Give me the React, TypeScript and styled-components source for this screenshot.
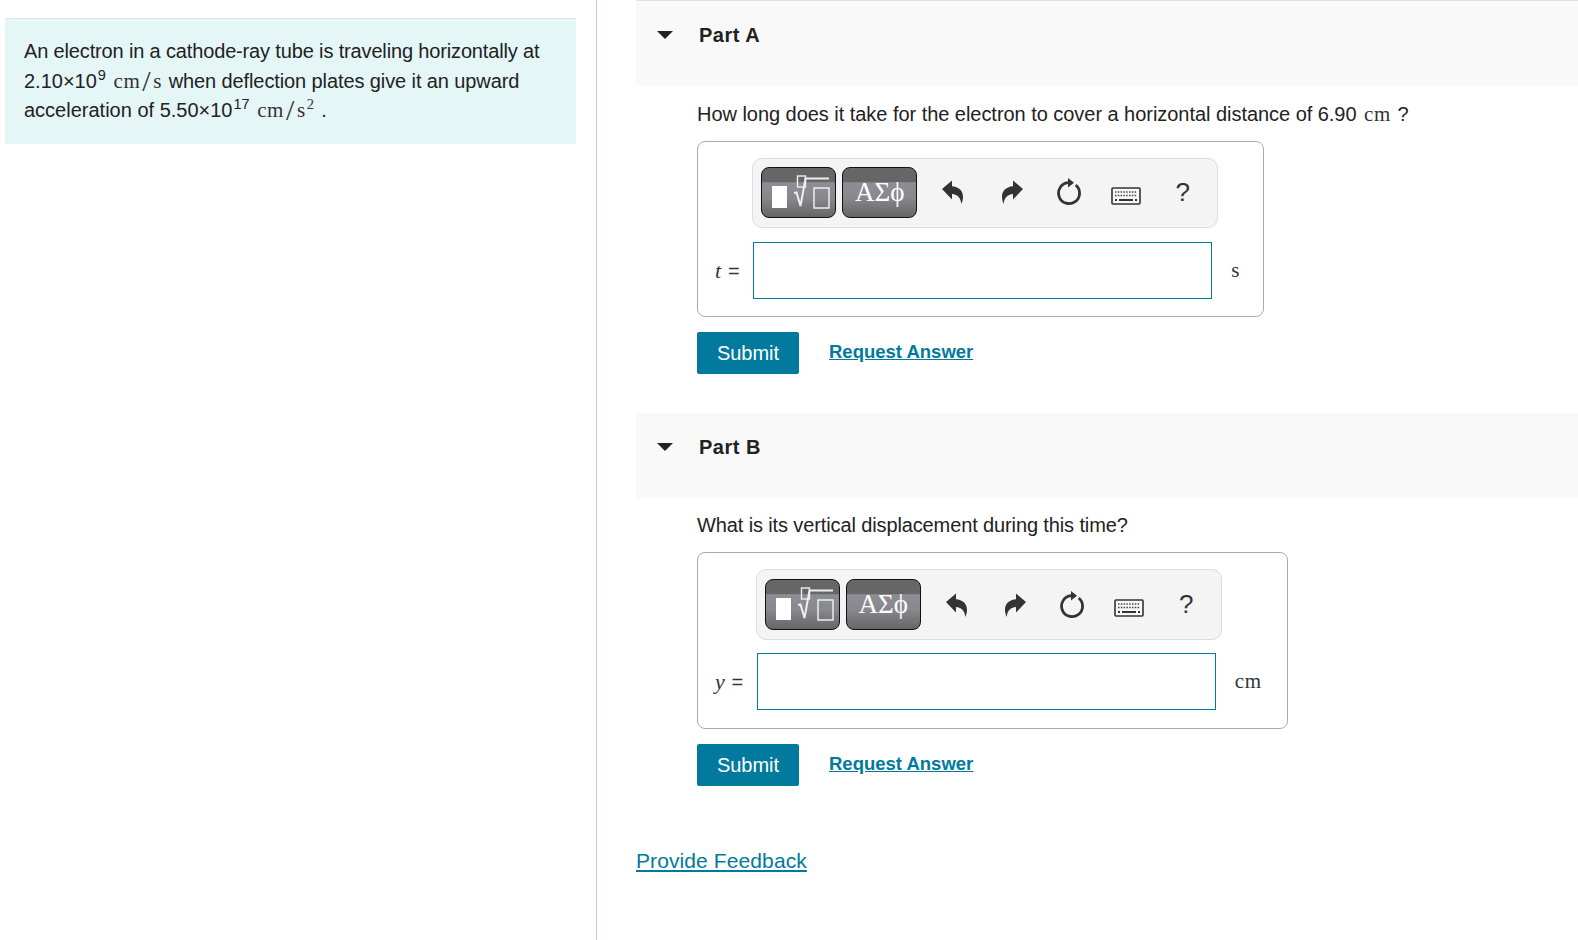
import React from "react";
import styled, { createGlobalStyle } from "styled-components";

const Global = createGlobalStyle`
  html, body { margin: 0; padding: 0; background: #fff; }
  body { font-family: "Liberation Sans", Arial, sans-serif; color: #222; font-size: 20px; }
`;
const Page = styled.div`display: flex; height: 940px; overflow: hidden;`;
const LeftColumn = styled.aside`
  width: 597px; flex: none; box-sizing: border-box; padding: 18px 20px 0 5px;
  border-right: 1px solid #bcd0e5;
`;
const Intro = styled.div`
  background: #e5f6f7; border-top: 1px solid #dfe5e6; height: 126px; box-sizing: border-box;
  padding: 18px 19px; font-size: 20px; line-height: 29.5px; color: #222;
`;
const Condensed = styled.span`letter-spacing: ${(p: { $s: number }) => p.$s}px;`;
const Sup = styled.sup`font-size: 14.5px; line-height: 0; vertical-align: baseline; position: relative; top: -8px; margin-left: 1px;`;
const MathText = styled.span`font-family: "Liberation Serif", serif; font-size: 21px; color: #333; letter-spacing: 0.6px; margin: 0 1px 0 2px;`;
const Slash = styled.span`font-size: 30px; font-weight: 300; line-height: 0; margin: 0 2px; position: relative; top: 3px;`;
const RightColumn = styled.main`flex: 1; padding-left: 39px; min-width: 0;`;
const PartSection = styled.section`margin-bottom: 39px;`;
const PartHeader = styled.header`
  box-sizing: border-box; background: #f9f9f9; display: flex; align-items: flex-start;
  padding: 22px 0 0 21px; gap: 26px;
  ${(p: { $top?: boolean }) => p.$top ? "height: 86px; border-top: 1px solid #e0e0e0;" : "height: 85px; padding-top: 22px;"}
`;
const Triangle = styled.span`
  width: 0; height: 0; margin-top: 8px; border-left: 8px solid transparent; border-right: 8px solid transparent;
  border-top: 8px solid #222;
`;
const PartTitle = styled.h2`margin: 0; font-size: 20px; line-height: 24px; font-weight: 700; color: #222; letter-spacing: 0.5px;`;
const PartBody = styled.div`padding-left: 61px;`;
const Question = styled.p<{ $s: number; $h: number }>`
  margin: 0; line-height: 26px; font-size: 20px; color: #222; box-sizing: border-box;
  height: ${(p) => p.$h}px; padding-top: ${(p) => p.$h - 40}px;
  letter-spacing: ${(p) => p.$s}px;
`;
const AnswerBox = styled.div<{ $right: number; $bottom: number }>`
  display: inline-grid; grid-template-columns: auto auto auto; align-items: center;
  border: 1px solid #aaa; border-radius: 8px; padding: 16px ${(p) => p.$right}px ${(p) => p.$bottom}px 16px;
  box-sizing: border-box;
`;
const Toolbar = styled.div<{ $tall?: boolean }>`
  grid-column: 2; margin-left: -1px; box-sizing: border-box;
  height: ${(p) => (p.$tall ? 71 : 70)}px; margin-bottom: ${(p) => (p.$tall ? 13 : 14)}px;
  background: #f4f4f4; border: 1px solid #ddd; border-radius: 10px; display: flex; align-items: center;
  padding: 0 0 ${(p) => (p.$tall ? 0 : 2)}px 8px; width: 466px;
`;
const TemplateButton = styled.div`
  width: 75px; height: 51px; box-sizing: border-box; border: 1px solid #111; border-radius: 8px; margin-right: 6px;
  background: linear-gradient(#666 0, #666 28%, #8d8d95 30%, #88888e 60%, #666 100%); color: #fff;
  display: flex; align-items: center; justify-content: center; flex: none;
  font-family: "Liberation Serif", serif; font-size: 27px; overflow: hidden;
`;
const IconSlot = styled.div<{ $w: number; $drop?: number }>`
  flex: none; display: flex; align-items: center; justify-content: center; color: #333;
  width: ${(p) => p.$w}px; height: 32px; margin-top: ${(p) => p.$drop ?? 0}px;
  font-family: "Liberation Sans", sans-serif; font-size: 26px;
`;
const Label = styled.div`
  grid-row: 2; padding-left: 1px; padding-right: 13px; font-size: 20px; letter-spacing: 0.6px; color: #333; white-space: nowrap;
`;
const Italic = styled.i`font-family: "Liberation Serif", serif; font-size: 22px;`;
const Field = styled.input`
  grid-row: 2; width: 459px; height: 57px; box-sizing: border-box; border: 1px solid #007c9e;
  background: #fff; outline: none; margin: 0; padding: 0;
`;
const Unit = styled.div`grid-row: 2; padding-left: 13px; font-family: "Liberation Serif", serif; font-size: 21px; color: #333; letter-spacing: 0.6px;`;
const Actions = styled.div`display: flex; align-items: center; gap: 30px; margin-top: 15px;`;
const SubmitButton = styled.button`
  width: 102px; height: 42px; background: #027a9d; color: #fff; border: 0; border-radius: 2px;
  font-family: inherit; font-size: 20px; padding: 0;
`;
const RequestLink = styled.a`font-size: 18.5px; font-weight: 700; color: #007a9c; text-decoration: underline; position: relative; top: -1px;`;
const Feedback = styled.a`
  display: block; margin-top: 63px; font-size: 21px; color: #007a9c; text-decoration: underline; letter-spacing: 0.1px;
`;

const Undo = ({ flip }: { flip?: boolean }) => (
  <svg width="24" height="26" viewBox="0 0 24 26" style={flip ? { transform: "scaleX(-1)" } : undefined}>
    <path fill="#333" d="M1 10 11 1.500v5.700c6.500 .5 11 4.300 11 10.300 0 2.500-.5 5-1.700 7.500-.5-6-3.600-9.500-9.300-10v5.500Z" />
  </svg>
);
const Redo = () => (
  <svg width="28" height="28" viewBox="0 0 28 28">
    <path fill="none" stroke="#333" strokeWidth="2.800" d="M20.700 7A10.500 10.500 0 1 1 13 4.700" />
    <path fill="#333" d="M13 0 19 4.700 13 9.500Z" />
  </svg>
);
const Keyboard = () => (
  <svg width="30" height="20" viewBox="0 0 30 20">
    <rect x="1" y="2" width="28" height="16" rx="1" fill="#f8f8f8" stroke="#333" strokeWidth="1.600" />
    <path stroke="#444" strokeWidth="1.500" strokeDasharray="1.500 1.300" d="M4 6h22M4 9.500h22" />
    <path stroke="#333" strokeWidth="1.800" d="M8 14h14M4 14h2M24 14h2" />
  </svg>
);
const Radical = () => (
  <svg width="73" height="49" viewBox="0 0 73 49">
    <rect x="10" y="18" width="15" height="22" fill="#fff" />
    <rect x="35.500" y="8" width="8" height="11" fill="none" stroke="#eee" strokeWidth="1.400" />
    <path fill="none" stroke="#eee" strokeWidth="2" d="M32 25l2.500-.5L38.500 38 43.500 10.500H67" />
    <rect x="52" y="20" width="15" height="20" fill="none" stroke="#eee" strokeWidth="1.500" />
  </svg>
);
const Tools = ({ tall }: { tall?: boolean }) => (
  <Toolbar $tall={tall}>
    <TemplateButton><Radical /></TemplateButton>
    <TemplateButton>ΑΣϕ</TemplateButton>
    <IconSlot $w={60}><Undo /></IconSlot>
    <IconSlot $w={57}><Undo flip /></IconSlot>
    <IconSlot $w={57}><Redo /></IconSlot>
    <IconSlot $w={57} $drop={7}><Keyboard /></IconSlot>
    <IconSlot $w={57}>?</IconSlot>
  </Toolbar>
);
const Part = ({ name, top, label, unit, question, spacing, gap, right, bottom, tall }: { name: string; top?: boolean; label: string; unit: string; question: React.ReactNode; spacing: number; gap: number; right: number; bottom: number; tall?: boolean }) => (
  <PartSection>
    <PartHeader $top={top}>
      <Triangle />
      <PartTitle>{name}</PartTitle>
    </PartHeader>
    <PartBody>
      <Question $s={spacing} $h={gap}>{question}</Question>
      <AnswerBox $right={right} $bottom={bottom}>
        <Tools tall={tall} />
        <Label><Italic>{label}</Italic> =</Label>
        <Field aria-label={label} />
        <Unit>{unit}</Unit>
      </AnswerBox>
      <Actions>
        <SubmitButton>Submit</SubmitButton>
        <RequestLink href="#">Request Answer</RequestLink>
      </Actions>
    </PartBody>
  </PartSection>
);

export default function App() {
  return (
    <Page>
      <Global />
      <LeftColumn>
        <Intro>
          <Condensed $s={-0.15}>An electron in a cathode-ray tube is traveling horizontally at</Condensed><br />
          2.10×10<Sup>9</Sup> <MathText>cm<Slash>/</Slash>s</MathText> <Condensed $s={-0.1}>when deflection plates give it an upward</Condensed><br />
          acceleration of 5.50×10<Sup>17</Sup> <MathText>cm<Slash>/</Slash>s<Sup>2</Sup></MathText> .
        </Intro>
      </LeftColumn>
      <RightColumn>
        <Part name="Part A" top label="t" unit="s" spacing={-0.04} gap={55} right={23} bottom={17} question={<>How long does it take for the electron to cover a horizontal distance of 6.90 <MathText>cm</MathText> ?</>} />
        <Part name="Part B" label="y" unit="cm" spacing={-0.12} gap={54} right={25} bottom={18} tall question="What is its vertical displacement during this time?" />
        <Feedback href="#">Provide Feedback</Feedback>
      </RightColumn>
    </Page>
  );
}
